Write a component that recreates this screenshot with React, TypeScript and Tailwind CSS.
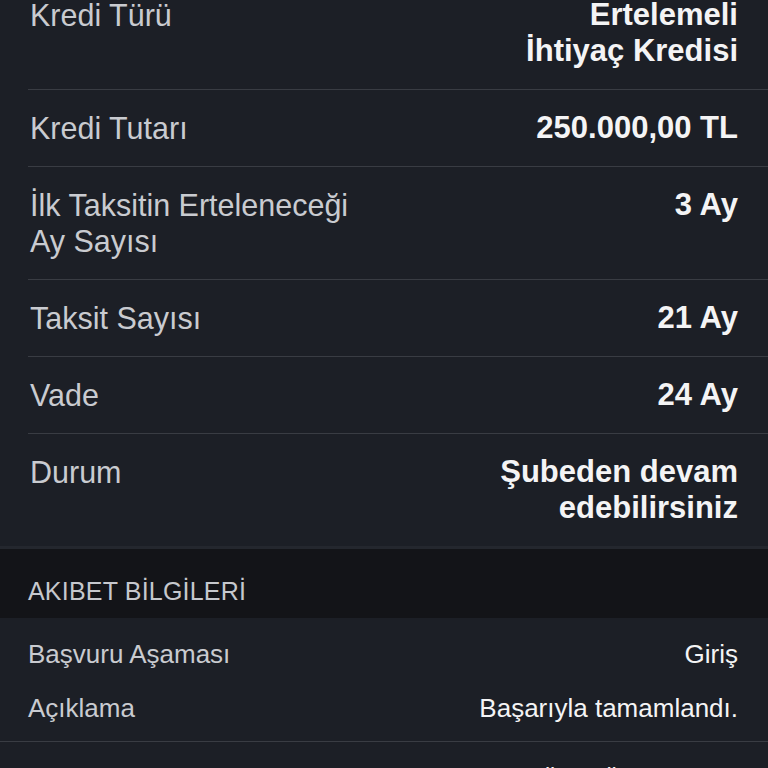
import React from 'react';

type Row = { label: string; value: string };

const loanRows: Row[] = [
  { label: 'Kredi Türü', value: 'Ertelemeli İhtiyaç Kredisi' },
  { label: 'Kredi Tutarı', value: '250.000,00 TL' },
  { label: 'İlk Taksitin Erteleneceği Ay Sayısı', value: '3 Ay' },
  { label: 'Taksit Sayısı', value: '21 Ay' },
  { label: 'Vade', value: '24 Ay' },
  { label: 'Durum', value: 'Şubeden devam edebilirsiniz' },
];

const statusRows: Row[] = [
  { label: 'Başvuru Aşaması', value: 'Giriş' },
  { label: 'Açıklama', value: 'Başarıyla tamamlandı.' },
];

export default function App() {
  return (
    <div className="h-[768px] w-[768px] overflow-hidden bg-[#1c1f26] font-['Liberation_Sans',Arial,sans-serif]">
      {/* Loan details */}
      <div className="-mt-[23px] border-b-[3px] border-[#24272e]">
        {loanRows.map((row, i) => (
          <div
            key={row.label}
            className={`ml-[28px] flex items-start justify-between gap-4 py-[20px] pr-[30px] pl-[2px] ${
              i < loanRows.length - 1 ? 'border-b border-[#393c43]' : ''
            }`}
          >
            <div className="max-w-[340px] text-[30.5px] leading-[36px] text-[#c9cbd0]">{row.label}</div>
            <div className="max-w-[240px] text-right text-[31px] leading-[36px] font-semibold text-[#f4f4f5]">
              {row.value}
            </div>
          </div>
        ))}
      </div>

      {/* Section header */}
      <div className="bg-[#131418] px-[28px] pt-[27px] pb-[12px]">
        <div className="text-[25px] leading-[30px] tracking-[0.2px] text-[#c6c8cd]">AKIBET BİLGİLERİ</div>
      </div>

      {/* Status info */}
      <div className="border-b border-[#393c43] pt-[9px] pb-[6px]">
        {statusRows.map((row) => (
          <div key={row.label} className="flex items-center justify-between px-[28px] py-[12px] pr-[30px]">
            <div className="text-[26px] leading-[30px] text-[#c9cbd0]">{row.label}</div>
            <div className="text-[26px] leading-[30px] text-[#f4f4f5]">{row.value}</div>
          </div>
        ))}
      </div>

      <div className="flex justify-end px-[30px] pt-[23px]">
        <div className="text-[26px] leading-[30px] text-[#f4f4f5]">Ödül Ücret Tutarı</div>
      </div>
    </div>
  );
}
